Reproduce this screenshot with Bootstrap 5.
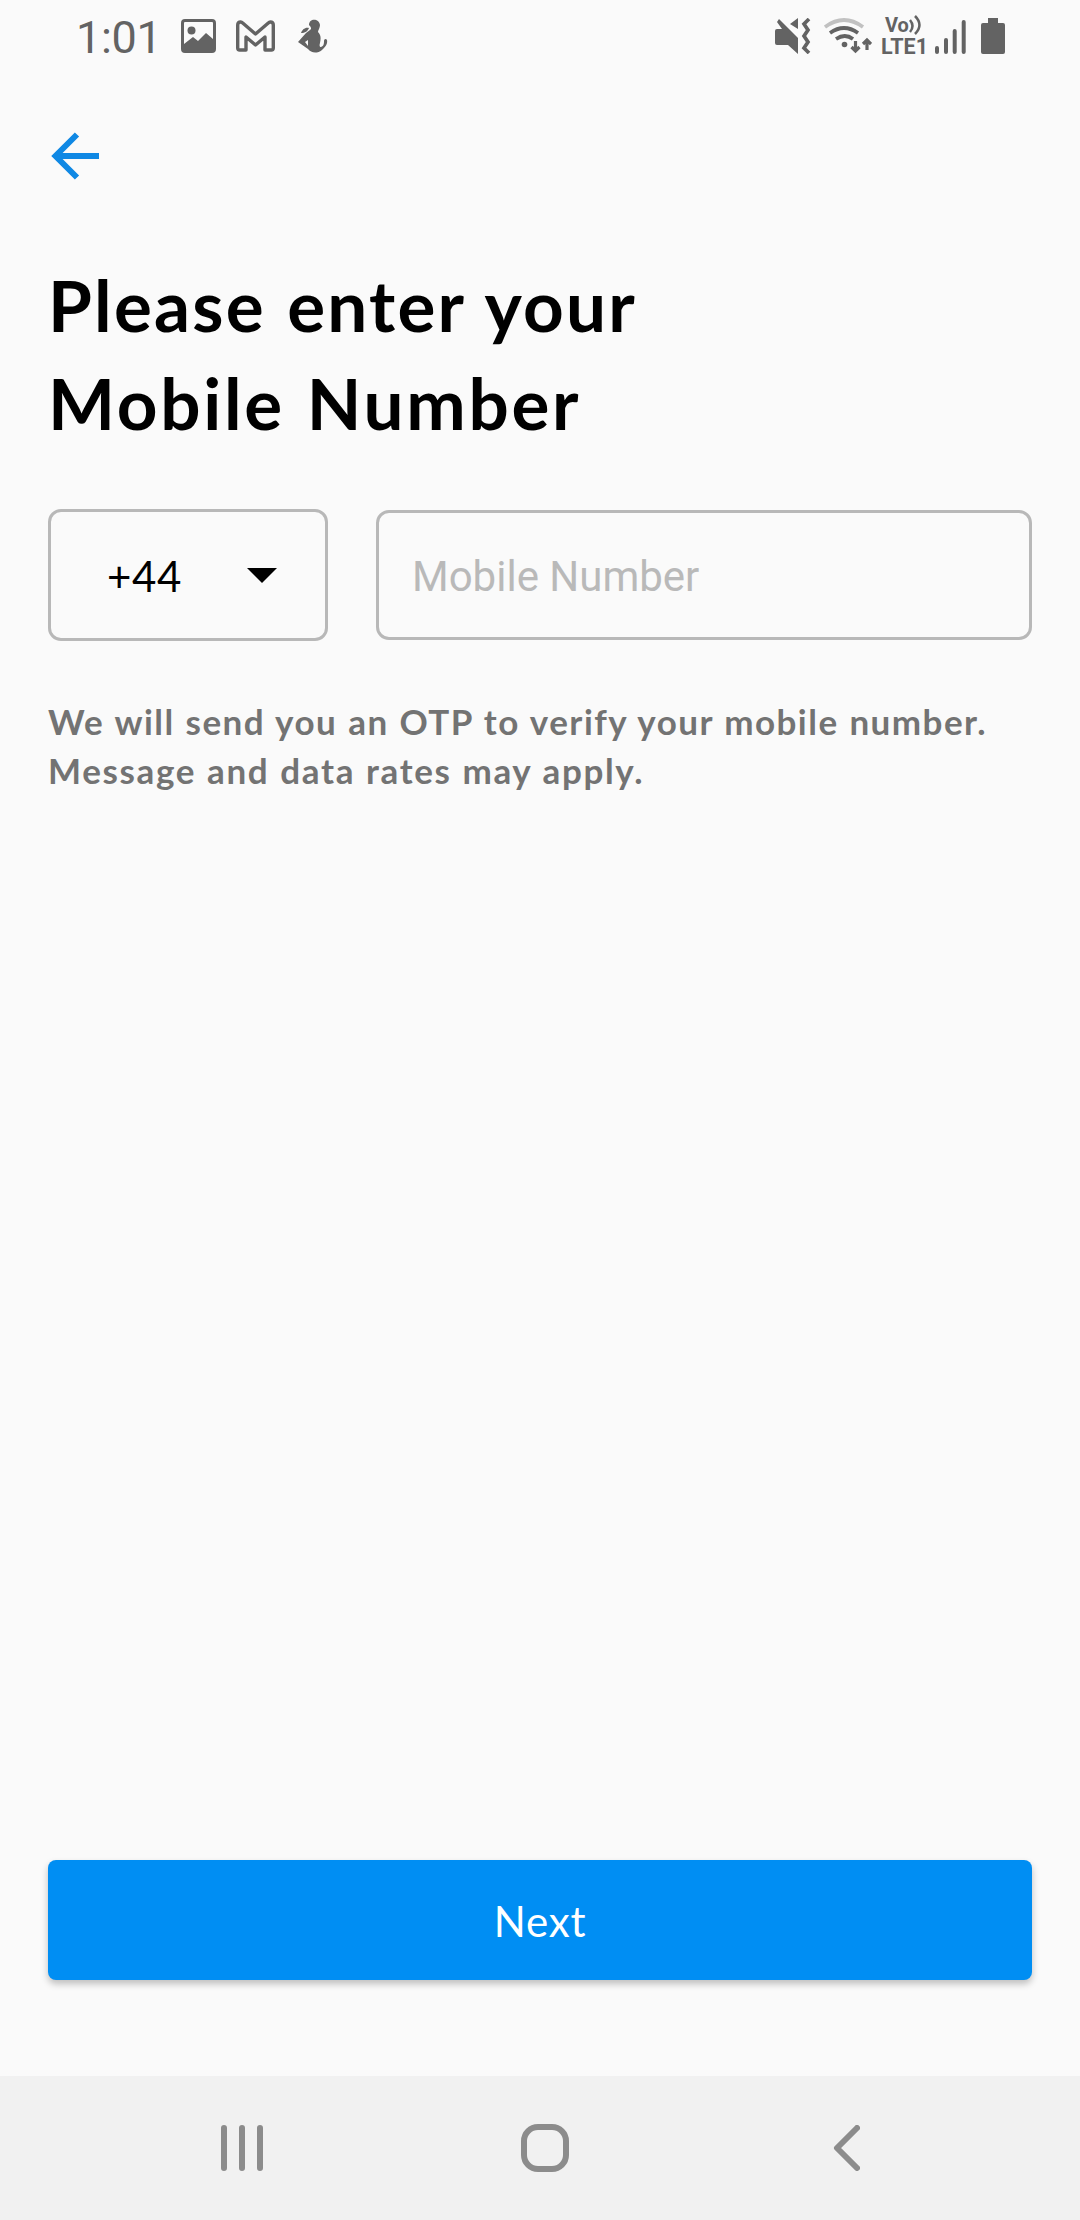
<!DOCTYPE html>
<html lang="en">
<head>
<meta charset="utf-8">
<meta name="viewport" content="width=device-width, initial-scale=1">
<title>Mobile Number</title>
<link href="https://cdn.jsdelivr.net/npm/bootstrap@5.3.0/dist/css/bootstrap.min.css" rel="stylesheet">
<style>
  body { background: #fafafa; font-family: Lato, "Open Sans", sans-serif; color: #000; }
  .screen { width: 1080px; height: 2220px; }
  svg { display: block; flex: none; }
  .status-bar { height: 72px; padding: 0 75px 0 76px; color: #636363; font-family: Roboto, sans-serif; }
  .clock { font-size: 45px; line-height: 72px; width: 105px; letter-spacing: -.3px; padding-top: 3px; }
  .icon-mail { margin-left: 20px; }
  .icon-figure { margin-left: 23px; }
  .icon-wifi { margin-left: 12px; }
  .icon-battery { margin-left: 15px; }
  .volte { font-weight: 700; font-size: 21.5px; line-height: 21px; width: 45px; margin: 0 9px; }
  .volte-top { font-size: 20px; }
  .back-link { padding: 60px 0 0 51px; height: 108px; color: #0f88e4; }
  .form-area { padding: 76px 48px 0; }
  .title-text { font-size: 71px; line-height: 98px; font-weight: 700; letter-spacing: 2.2px; word-spacing: 2px; margin: 0 0 57px; }
  .title-second { letter-spacing: 2.7px; }
  .code-select { width: 280px; height: 132px; border: 3px solid #b8b8b8; border-radius: 13px; padding: 0 48px 0 56px; font-size: 42px; }
  .dial-code { letter-spacing: .6px; padding-top: 2px; }
  .number-input, .number-input:focus { height: 130px; border: 3px solid #b8b8b8; border-radius: 13px; background: transparent; font: 42px/1.2 Roboto, sans-serif; padding: 2px 33px 0; margin-top: 1px; }
  .number-input::placeholder { color: #b9b9b9; opacity: 1; }
  .hint { font-size: 35px; line-height: 49px; font-weight: 700; color: #737373; letter-spacing: 1.47px; word-spacing: .9px; margin: 56px 0 0; white-space: nowrap; }
  .hint-second { letter-spacing: 1.63px; }
  .next-wrap { padding: 0 48px 96px; }
  .btn-next, .btn-next:hover { height: 120px; background: #008ef3; color: #fff; border: 0; border-radius: 8px; font-size: 42px; letter-spacing: .8px; padding-top: 8px; box-shadow: 0 4px 7px rgba(0,0,0,.24); }
  .nav-keys { height: 144px; background: #f1f1f1; padding: 0 220px; color: #8c8c8c; }
</style>
</head>
<body>
<div class="screen d-flex flex-column overflow-hidden">
  <header class="status-bar d-flex align-items-center">
    <div class="clock">1:01</div>
    <div class="d-flex align-items-center">
      <svg width="35" height="34" viewBox="181 19 35 34" fill="currentColor"><path fill-rule="evenodd" d="M185 19h27q4 0 4 4v26q0 4-4 4h-27q-4 0-4-4V23q0-4 4-4zm-1 4v21l9-7 5 4 8-8 7 6V23q0-1-1-1h-27q-1 0-1 1z"/><circle cx="191.500" cy="30.500" r="4"/></svg>
      <svg class="icon-mail" width="39" height="32" viewBox="236 19 39 32" fill="none" stroke="currentColor" stroke-width="3.400" stroke-linejoin="round"><path d="M237.700 24q0-3 3-3 1 0 2 1l12.800 11 12.800-11q1-1 2-1 3 0 3 3v23q0 2-2 2H265V36l-9.500 8-9.500-8v13h-6.300q-2 0-2-2z"/></svg>
      <svg class="icon-figure" width="30" height="34" viewBox="298 19 30 34" fill="currentColor"><path d="M309 25c0-7 10-7 11 0 0 3-2 5-2 7 3 3 3 6 2 11-1 3 0 4 1 4 3-1 3-4 3-6 0-2 2-3 3-1 1 5-3 8-5 10-5 4-11 3-14-1l-10-7 8-9 4-3c2-1 1-3-1-5zM305 42l3 4v-6z" fill-rule="evenodd"/><path d="M301 33c1-3 4-6 8-5-1 3-4 5-8 5z"/></svg>
    </div>
    <div class="d-flex align-items-center ms-auto">
      <svg width="37" height="36" viewBox="775 18 37 36" fill="currentColor"><path d="M777 29h5l-5-7 2-3 19 19v16l-10-9h-11q-2 0-2-2V31q0-2 2-2zM790 24l8-6v11z"/><path d="M809 19l-5 5 4 6-4 6 4 6-4 6 5 5" fill="none" stroke="currentColor" stroke-width="3.700"/></svg>
      <svg class="icon-wifi" width="48" height="36" viewBox="824 18 48 36" fill="none" stroke="currentColor" stroke-width="3.700"><path d="M825 27q19-14 38 0" stroke="#c1c1c1"/><path d="M830 33q14-10 28 0M836 39q9-6 17 0"/><circle cx="844.500" cy="44.500" r="2.800" fill="currentColor" stroke="none"/><path d="M855.500 41v10m-4-4 4 4 4-4M867 50V40m-4 4 4-4 4 4" stroke-width="3.200"/></svg>
      <div class="volte"><div class="volte-top d-flex ps-1">Vo<svg width="12" height="20" viewBox="909 17 12 20" fill="none" stroke="currentColor" stroke-width="2.500"><path d="M910 22q5 6 0 12M915 18q9 9 0 18"/></svg></div><div>LTE1</div></div>
      <svg width="31" height="36" viewBox="935 18 31 36" stroke="currentColor" stroke-width="4" stroke-linecap="round"><path d="M937 48v4M946 40v12M954.700 31v21M963.700 22v30"/></svg>
      <svg class="icon-battery" width="24" height="36" viewBox="981 18 24 36" fill="currentColor"><path d="M988 18h10v5h5q2 0 2 2v27q0 2-2 2h-20q-2 0-2-2V25q0-2 2-2h5z"/></svg>
    </div>
  </header>

  <a class="back-link d-block" href="#" aria-label="Back"><svg width="48" height="48" viewBox="51 132 48 48" fill="none" stroke="currentColor" stroke-width="6"><path d="M99 156H56M77 134.500 55.500 156 77 177.500"/></svg></a>

  <main class="form-area">
    <h1 class="title-text">Please enter your<br><span class="title-second">Mobile Number</span></h1>
    <div class="d-flex gap-5 align-items-start">
      <div class="code-select d-flex align-items-center justify-content-between flex-shrink-0"><span class="dial-code">+44</span><svg width="30" height="15" viewBox="0 0 30 15"><path d="M0 0h30L15 15z"/></svg></div>
      <input class="form-control number-input" type="tel" placeholder="Mobile Number">
    </div>
    <p class="hint">We will send you an OTP to verify your mobile number.<br><span class="hint-second">Message and data rates may apply.</span></p>
  </main>

  <div class="next-wrap mt-auto"><button class="btn btn-next w-100" type="button">Next</button></div>

  <nav class="nav-keys d-flex align-items-center justify-content-between flex-shrink-0">
    <svg width="44" height="46" viewBox="220 2125 44 46" stroke="currentColor" stroke-width="6" stroke-linecap="round"><path d="M224 2128v40M242 2128v40M260 2128v40"/></svg>
    <svg class="me-2" width="48" height="48" viewBox="0 0 48 48" fill="none" stroke="currentColor" stroke-width="6"><rect x="3" y="3" width="42" height="42" rx="14"/></svg>
    <svg width="27" height="46" viewBox="833 2125 27 46" fill="none" stroke="currentColor" stroke-width="6" stroke-linecap="round" stroke-linejoin="round"><path d="M857 2128l-20 20 20 20"/></svg>
  </nav>
</div>
<script src="https://cdn.jsdelivr.net/npm/bootstrap@5.3.0/dist/js/bootstrap.bundle.min.js"></script>
</body>
</html>
